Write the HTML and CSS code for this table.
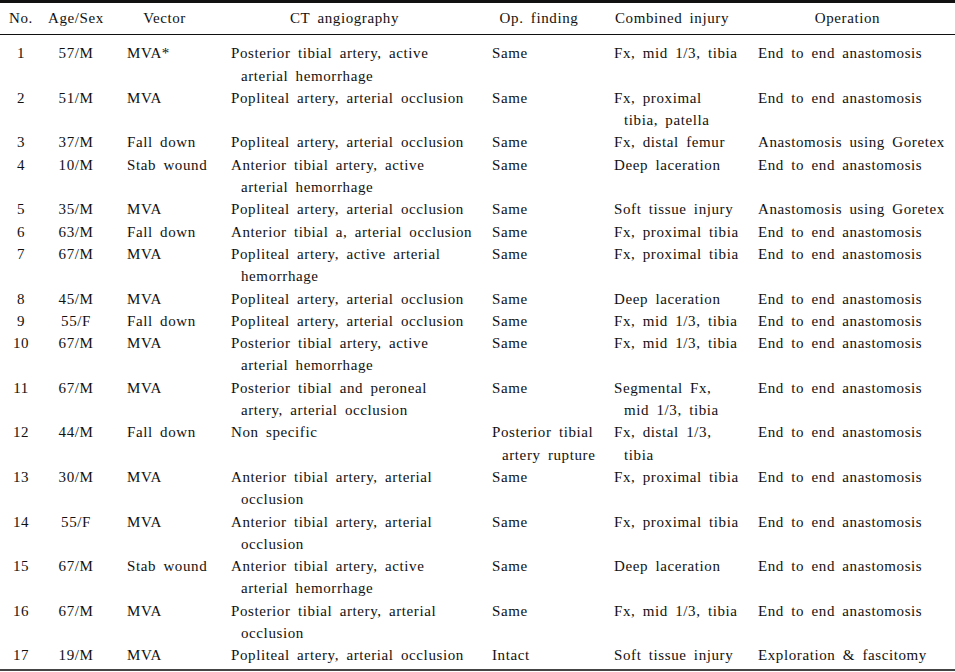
FILE: index.html
```html
<!DOCTYPE html>
<html>
<head>
<meta charset="utf-8">
<link rel="stylesheet" href="styles.css">
</head>
<body>
<table class="tbl">
<colgroup>
<col class="c-no"><col class="c-age"><col class="c-vec"><col class="c-ct"><col class="c-op"><col class="c-comb"><col class="c-oper">
</colgroup>
<thead>
<tr>
<th class="no">No.</th><th class="age">Age/Sex</th><th class="vec">Vector</th><th class="ct">CT angiography</th><th class="op">Op. finding</th><th class="comb">Combined injury</th><th class="oper">Operation</th>
</tr>
</thead>
<tbody>
<tr class="first"><td class="no">1</td><td class="age">57/M</td><td class="vec">MVA*</td><td class="ct">Posterior tibial artery, active<br>arterial hemorrhage</td><td class="op">Same</td><td class="comb">Fx, mid 1/3, tibia</td><td class="oper">End to end anastomosis</td></tr>
<tr><td class="no">2</td><td class="age">51/M</td><td class="vec">MVA</td><td class="ct">Popliteal artery, arterial occlusion</td><td class="op">Same</td><td class="comb">Fx, proximal<br>tibia, patella</td><td class="oper">End to end anastomosis</td></tr>
<tr><td class="no">3</td><td class="age">37/M</td><td class="vec">Fall down</td><td class="ct">Popliteal artery, arterial occlusion</td><td class="op">Same</td><td class="comb">Fx, distal femur</td><td class="oper">Anastomosis using Goretex</td></tr>
<tr><td class="no">4</td><td class="age">10/M</td><td class="vec">Stab wound</td><td class="ct">Anterior tibial artery, active<br>arterial hemorrhage</td><td class="op">Same</td><td class="comb">Deep laceration</td><td class="oper">End to end anastomosis</td></tr>
<tr><td class="no">5</td><td class="age">35/M</td><td class="vec">MVA</td><td class="ct">Popliteal artery, arterial occlusion</td><td class="op">Same</td><td class="comb">Soft tissue injury</td><td class="oper">Anastomosis using Goretex</td></tr>
<tr><td class="no">6</td><td class="age">63/M</td><td class="vec">Fall down</td><td class="ct">Anterior tibial a, arterial occlusion</td><td class="op">Same</td><td class="comb">Fx, proximal tibia</td><td class="oper">End to end anastomosis</td></tr>
<tr><td class="no">7</td><td class="age">67/M</td><td class="vec">MVA</td><td class="ct">Popliteal artery, active arterial<br>hemorrhage</td><td class="op">Same</td><td class="comb">Fx, proximal tibia</td><td class="oper">End to end anastomosis</td></tr>
<tr><td class="no">8</td><td class="age">45/M</td><td class="vec">MVA</td><td class="ct">Popliteal artery, arterial occlusion</td><td class="op">Same</td><td class="comb">Deep laceration</td><td class="oper">End to end anastomosis</td></tr>
<tr><td class="no">9</td><td class="age">55/F</td><td class="vec">Fall down</td><td class="ct">Popliteal artery, arterial occlusion</td><td class="op">Same</td><td class="comb">Fx, mid 1/3, tibia</td><td class="oper">End to end anastomosis</td></tr>
<tr><td class="no">10</td><td class="age">67/M</td><td class="vec">MVA</td><td class="ct">Posterior tibial artery, active<br>arterial hemorrhage</td><td class="op">Same</td><td class="comb">Fx, mid 1/3, tibia</td><td class="oper">End to end anastomosis</td></tr>
<tr><td class="no">11</td><td class="age">67/M</td><td class="vec">MVA</td><td class="ct">Posterior tibial and peroneal<br>artery, arterial occlusion</td><td class="op">Same</td><td class="comb">Segmental Fx,<br>mid 1/3, tibia</td><td class="oper">End to end anastomosis</td></tr>
<tr><td class="no">12</td><td class="age">44/M</td><td class="vec">Fall down</td><td class="ct">Non specific</td><td class="op">Posterior tibial<br>artery rupture</td><td class="comb">Fx, distal 1/3,<br>tibia</td><td class="oper">End to end anastomosis</td></tr>
<tr><td class="no">13</td><td class="age">30/M</td><td class="vec">MVA</td><td class="ct">Anterior tibial artery, arterial<br>occlusion</td><td class="op">Same</td><td class="comb">Fx, proximal tibia</td><td class="oper">End to end anastomosis</td></tr>
<tr><td class="no">14</td><td class="age">55/F</td><td class="vec">MVA</td><td class="ct">Anterior tibial artery, arterial<br>occlusion</td><td class="op">Same</td><td class="comb">Fx, proximal tibia</td><td class="oper">End to end anastomosis</td></tr>
<tr><td class="no">15</td><td class="age">67/M</td><td class="vec">Stab wound</td><td class="ct">Anterior tibial artery, active<br>arterial hemorrhage</td><td class="op">Same</td><td class="comb">Deep laceration</td><td class="oper">End to end anastomosis</td></tr>
<tr><td class="no">16</td><td class="age">67/M</td><td class="vec">MVA</td><td class="ct">Posterior tibial artery, arterial<br>occlusion</td><td class="op">Same</td><td class="comb">Fx, mid 1/3, tibia</td><td class="oper">End to end anastomosis</td></tr>
<tr class="last"><td class="no">17</td><td class="age">19/M</td><td class="vec">MVA</td><td class="ct">Popliteal artery, arterial occlusion</td><td class="op">Intact</td><td class="comb">Soft tissue injury</td><td class="oper">Exploration &amp; fascitomy</td></tr>
</tbody>
</table>
</body>
</html>
```

FILE: styles.css
```css
html, body {
  margin: 0;
  padding: 0;
  background: #ffffff;
}

.tbl {
  width: 955px;
  border-collapse: collapse;
  table-layout: fixed;
  font-family: "Liberation Serif", "Times New Roman", serif;
  font-size: 15px;
  line-height: 22.3px;
  letter-spacing: 0.6px;
  word-spacing: 3px;
  color: #111111;
  border-top: 3px solid #111111;
  border-bottom: 2px solid #444444;
}

.c-no { width: 42px; }
.c-age { width: 68px; }
.c-vec { width: 111px; }
.c-ct { width: 261px; }
.c-op { width: 122px; }
.c-comb { width: 144px; }
.c-oper { width: 207px; }

th {
  font-weight: normal;
  text-align: center;
  white-space: nowrap;
  padding: 4px 18px 5px 10px;
  border-bottom: 1px solid #111111;
}

td {
  vertical-align: top;
  white-space: nowrap;
  padding: 0 0 0 20px;
  text-indent: -10px;
}

th.no, th.age { padding-left: 0; padding-right: 0; }
th.vec { padding-left: 17px; padding-right: 19px; }
th.ct { padding-right: 24px; }

td.no, td.age {
  text-align: center;
  padding-left: 0;
  text-indent: 0;
}

td.vec { padding-left: 27px; }

.first td { padding-top: 7px; }
.last td { padding-bottom: 2px; }
```
